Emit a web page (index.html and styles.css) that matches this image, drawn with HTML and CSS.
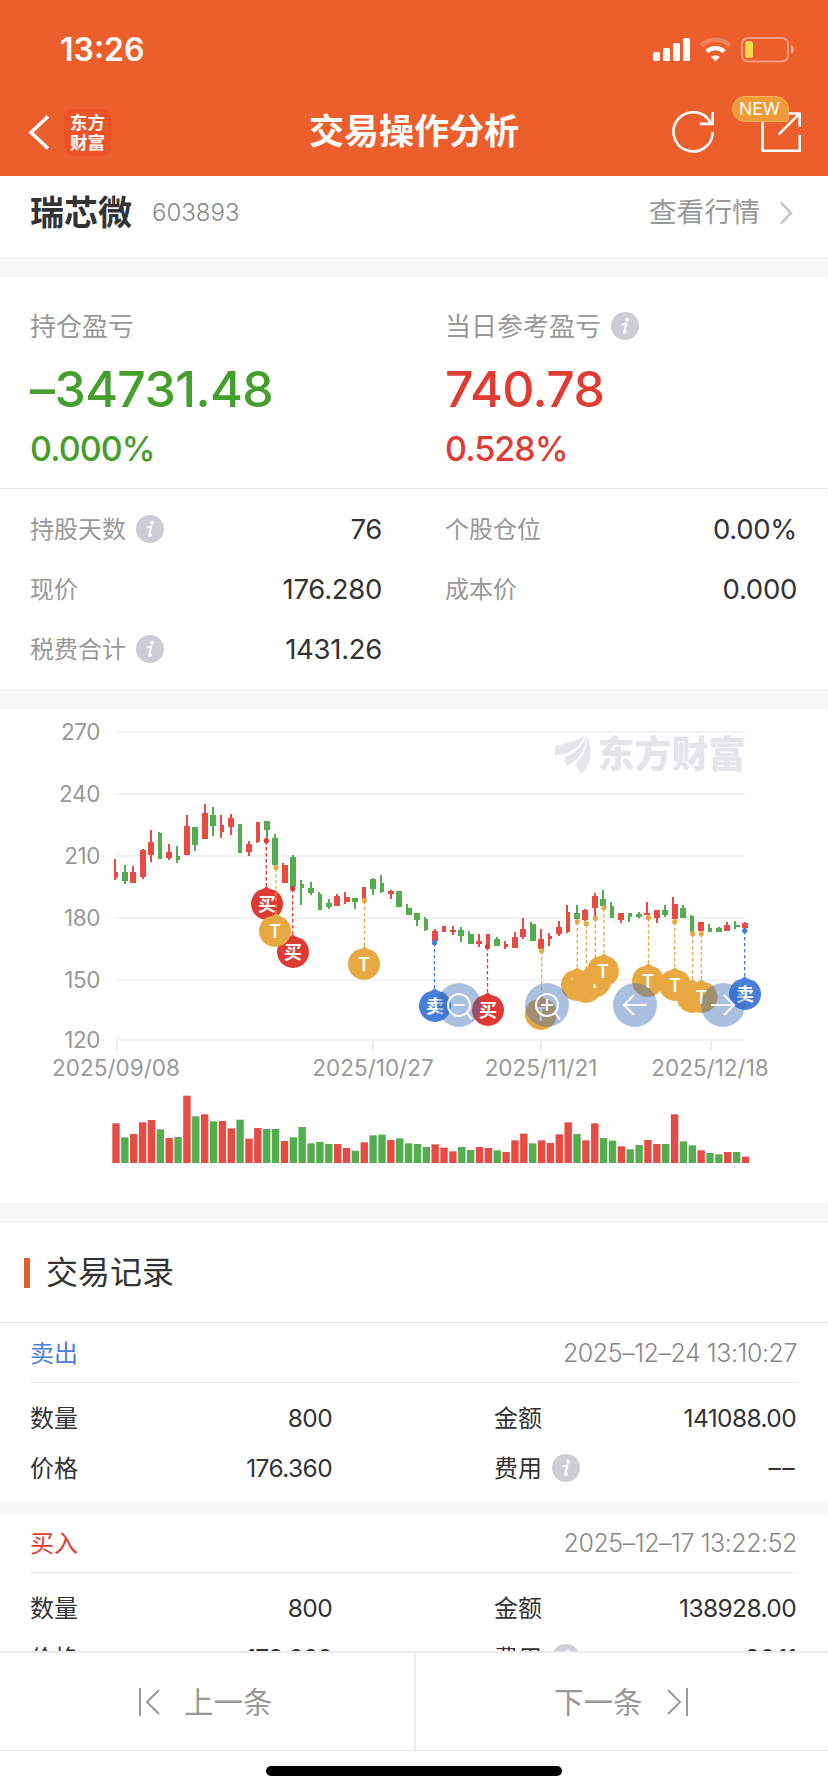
FILE: index.html
```html
<!DOCTYPE html>
<html lang="zh-CN">
<head>
<meta charset="utf-8">
<title>交易操作分析</title>
<link rel="stylesheet" href="styles.css">
</head>
<body>
<svg class="defs" width="0" height="0" aria-hidden="true">
  <symbol id="info" viewBox="0 0 28 28">
    <circle cx="14" cy="14" r="14" fill="#cdced3"/>
    <circle cx="16" cy="7.6" r="1.9" fill="#fff"/>
    <path d="M11.4 12.4c1.6-.2 2.8-.6 4-1.2l-2.3 9.3c-.2.9.8.5 2-.7" fill="none" stroke="#fff" stroke-width="2" stroke-linejoin="round" stroke-linecap="round"/>
  </symbol>
</svg>
<div class="screen">
  <header class="header">
    <div class="status">
      <span class="clock">13:26</span>
      <svg class="status-icons" width="144" height="28" viewBox="652 36 144 28">
        <g fill="#fff">
          <rect x="653" y="52" width="7" height="9" rx="1.5"/>
          <rect x="663" y="48" width="7" height="13" rx="1.5"/>
          <rect x="673" y="43" width="7" height="18" rx="1.5"/>
          <rect x="683" y="38" width="7" height="23" rx="1.5"/>
          <path d="M715.5 61.2l-4.3-4.3a6.2 6.2 0 0 1 8.6 0z"/>
        </g>
        <path d="M706.8 51.6a12.5 12.5 0 0 1 17.4 0" fill="none" stroke="#fff" stroke-width="4.4"/>
        <path d="M701.4 45.6a20 20 0 0 1 28.2 0" fill="none" stroke="#fff" stroke-opacity=".22" stroke-width="4.4"/>
        <rect x="742" y="38" width="46" height="23.5" rx="6" fill="none" stroke="#fff" stroke-opacity=".4" stroke-width="2"/>
        <path d="M791 45.2c4 1.6 4 6.800 0 8.400z" fill="#fff" fill-opacity=".45"/>
        <rect x="745" y="41" width="8" height="17" rx="3" fill="#f8d84a"/>
      </svg>
    </div>
    <div class="nav">
      <div class="nav-left">
        <svg width="22" height="36" viewBox="28 114 22 36"><path d="M48 116.500 31 132.500 48 148.500" fill="none" stroke="#fff" stroke-width="3.600"/></svg>
        <div class="logo"><span>东方</span><span>财富</span></div>
      </div>
      <h1 class="title">交易操作分析</h1>
      <div class="nav-right">
        <svg width="44" height="46" viewBox="672 109 44 46" fill="none" stroke="#fff" stroke-width="2.600">
          <path d="M712.700 132A19.600 19.600 0 1 1 710.600 123"/>
          <path d="M712.500 112v11.900h-12.700"/>
        </svg>
        <div class="share">
          <svg width="42" height="42" viewBox="760 111 42 42" fill="none" stroke="#fff" stroke-width="2.600">
            <path d="M762.500 113.500V150.700H799.700V135M788 113.500H799.700V127M799 114.200 778.500 134.700" stroke-linejoin="round"/>
          </svg>
          <span class="badge">NEW</span>
        </div>
      </div>
    </div>
  </header>

  <main class="content">
    <section class="stock">
      <b class="stock-name">瑞芯微</b>
      <span class="stock-code">603893</span>
      <span class="quote">查看行情</span>
      <svg width="14" height="24" viewBox="0 0 14 24"><path d="M2 1.500 12 12 2 22.500" fill="none" stroke="#c8c8cc" stroke-width="2.600"/></svg>
    </section>

    <section class="profit">
      <div class="profit-item green">
        <div class="label"><span>持仓盈亏</span></div>
        <div class="amount">–34731.48</div>
        <div class="percent">0.000%</div>
      </div>
      <div class="profit-item red">
        <div class="label"><span>当日参考盈亏</span><svg class="info"><use href="#info"/></svg></div>
        <div class="amount">740.78</div>
        <div class="percent">0.528%</div>
      </div>
    </section>

    <section class="metrics">
      <div class="metric"><span>持股天数</span><svg class="info"><use href="#info"/></svg><em>76</em></div>
      <div class="metric"><span>个股仓位</span><em>0.00%</em></div>
      <div class="metric"><span>现价</span><em>176.280</em></div>
      <div class="metric"><span>成本价</span><em>0.000</em></div>
      <div class="metric"><span>税费合计</span><svg class="info"><use href="#info"/></svg><em>1431.26</em></div>
    </section>

    <section class="chart">
      <svg id="chart" width="828" height="494" viewBox="0 709 828 494">
        <g id="grid"></g>
        <g class="watermark">
          <path d="M555 746C566 743 576 742 584 735.500C581 748 569 754 555 755.500Z"/>
          <path d="M567.500 766C564 762 564.500 758 565 757C576 753 583 746 585.500 736.500C587 750 579 758 567.500 766Z"/>
          <path d="M582 774C578 770 576 767 576 762.500C584 756 587.500 747 586.500 736C593 747 592 762 582 774Z"/>
          <text x="597.500" y="767.500">东方财富</text>
        </g>
        <g id="candles" shape-rendering="crispEdges"></g>
        <g id="markers"></g>
        <g id="volumes"></g>
        <g class="controls">
          <circle cx="459" cy="1005" r="22"/><circle cx="547" cy="1005" r="22"/>
          <circle cx="635" cy="1005" r="22"/><circle cx="723" cy="1005" r="22"/>
          <g class="control-icons">
            <circle cx="459" cy="1005" r="11"/><path d="M453.500 1005h11M467 1013l5 6.500"/>
            <circle cx="547" cy="1005" r="11"/><path d="M541 1005h12M547 999v12M555 1013l5 6.500"/>
            <path d="M647 1005H624M634 995l-10 10 10 10"/>
            <path d="M711 1005h23M724 995l10 10-10 10"/>
          </g>
        </g>
      </svg>
    </section>

    <section class="records">
      <h2 class="section-title"><span>交易记录</span></h2>
      <article class="record">
        <div class="record-head"><span class="sell">卖出</span><time>2025–12–24 13:10:27</time></div>
        <div class="record-grid">
          <div><span>数量</span><em>800</em></div>
          <div><span>金额</span><em>141088.00</em></div>
          <div><span>价格</span><em>176.360</em></div>
          <div><span>费用</span><svg class="info"><use href="#info"/></svg><em class="dashes">––</em></div>
        </div>
      </article>
      <article class="record">
        <div class="record-head"><span class="buy">买入</span><time>2025–12–17 13:22:52</time></div>
        <div class="record-grid">
          <div><span>数量</span><em>800</em></div>
          <div><span>金额</span><em>138928.00</em></div>
          <div><span>价格</span><em>173.660</em></div>
          <div><span>费用</span><svg class="info"><use href="#info"/></svg><em>36.11</em></div>
        </div>
      </article>
    </section>
  </main>

  <footer class="footer">
    <div class="pager">
      <div class="page-btn">
        <svg width="22" height="28" viewBox="0 0 22 28" fill="none" stroke="#999" stroke-width="2"><path d="M2 0v28M21 2 9 14l12 12"/></svg>
        <span>上一条</span>
      </div>
      <div class="page-btn next">
        <span>下一条</span>
        <svg width="22" height="28" viewBox="0 0 22 28" fill="none" stroke="#999" stroke-width="2"><path d="M20 0v28M1 2l12 12L1 26"/></svg>
      </div>
    </div>
    <div class="home"></div>
  </footer>
</div>
<script src="chart.js"></script>
</body>
</html>
```

FILE: styles.css
```css
* { box-sizing: border-box; margin: 0; padding: 0; }
body {
  width: 828px; height: 1792px; overflow: hidden; background: #fff; color: #333;
  font-family: Inter, "Noto Sans CJK SC", sans-serif;
}
em { font-style: normal; }
svg { display: block; flex: none; }
.defs { position: absolute; }
.screen { display: flex; flex-direction: column; height: 1792px; }

.header { flex: none; height: 176px; background: #ec5e2b; color: #fff; }
.status { display: flex; justify-content: space-between; align-items: center; height: 88px; padding: 12px 32px 0 60px; }
.clock { font-size: 32px; font-weight: 600; line-height: 40px; }
.nav { display: grid; grid-template-columns: 1fr auto 1fr; align-items: center; height: 88px; padding: 0 26px 0 28px; }
.nav-left { display: flex; align-items: center; gap: 14px; }
.logo {
  display: flex; flex-direction: column; justify-content: center; align-items: center;
  width: 47px; height: 47px; border-radius: 9px; background: #ec5428;
  font: 700 17.500px/20px "Noto Sans CJK SC", sans-serif;
}
.title { font-size: 35px; line-height: 44px; font-weight: 600; margin-left: -2px; padding-bottom: 2px; }
.nav-right { display: flex; justify-content: flex-end; align-items: center; gap: 44px; }
.share { position: relative; }
.badge {
  position: absolute; left: -28px; top: -15px; width: 57px; height: 26px;
  border: 1px solid #f6b45c; border-radius: 13px 13px 3px 13px; background: #f09a38;
  font-size: 17.500px; line-height: 24px; text-align: center; padding-right: 2px;
}

.content { flex: 1; min-height: 0; overflow: hidden; background: #f8f8f8; }
.content > section { background: #fff; }
.stock { display: flex; align-items: center; height: 81px; padding: 0 35px 8px 30px; }
.stock-name { font-size: 34px; line-height: 44px; font-weight: 600; margin-right: 20px; }
.stock-code { font-size: 24px; font-weight: 300; color: #888; }
.quote { margin: 0 19px 0 auto; font-size: 27.800px; line-height: 36px; color: #999; padding-bottom: 2px; }

.profit { display: grid; grid-template-columns: 415px 1fr; height: 212px; margin-top: 20px; padding: 31px 0 0 30px; border-bottom: 1px solid #e9e9e9; }
.label { display: flex; align-items: center; gap: 10px; height: 36px; font-size: 26px; color: #999; }
.label span, .metric span, .record-grid span, .record-head span { padding-bottom: 3px; }
.amount { margin-top: 19px; font-size: 50px; line-height: 52px; font-weight: 550; letter-spacing: -.6px; }
.percent { margin-top: 14px; font-size: 34px; line-height: 40px; font-weight: 500; letter-spacing: -.9px; }
.green { color: #459f2c; }
.red { color: #e13c33; }
.info { width: 28px; height: 28px; }

.metrics { display: grid; grid-template-columns: 352px 352px; column-gap: 63px; grid-auto-rows: 60px; height: 200px; padding: 10px 0 0 30px; }
.metric { display: flex; align-items: center; gap: 10px; font-size: 24px; color: #999; }
.metric em { margin-left: auto; font-size: 27.500px; letter-spacing: -.3px; color: #333; }

.chart { height: 494px; margin-top: 20px; }
.axis { font-size: 22.500px; fill: #999; }
.watermark { fill: #e5e5ea; }
.watermark text { font: 900 37px "Noto Sans CJK SC", sans-serif; }
.pin { font-size: 18px; font-weight: 600; fill: #fff; text-anchor: middle; }
.controls { fill: rgba(55, 105, 181, .42); }
.control-icons { fill: none; stroke: #fff; stroke-opacity: .9; stroke-width: 2.200; }

.records { margin-top: 20px; }
.section-title { display: flex; align-items: center; gap: 16px; height: 100px; padding-left: 24px; border-bottom: 1px solid #e9e9e9; font-size: 32px; font-weight: 400; }
.section-title span { padding-bottom: 5px; }
.section-title::before { content: ""; width: 6px; height: 30px; background: #d9602a; }
.record { height: 180px; padding: 0 30px; }
.record + .record { border-top: 10px solid #f7f7f7; height: 190px; }
.record-head { display: flex; align-items: center; justify-content: space-between; height: 60px; padding-right: 1px; border-bottom: 1px solid #e9e9e9; font-size: 24px; }
.record-head time { font-size: 25px; font-weight: 300; letter-spacing: -.45px; color: #888; }
.sell { color: #4a80dc; }
.buy { color: #e13c33; }
.record-grid { display: grid; grid-template-columns: 302px 302px; column-gap: 162px; grid-auto-rows: 50px; padding-top: 10px; }
.record-grid div { display: flex; align-items: center; gap: 10px; font-size: 24px; }
.record-grid em { margin-left: auto; font-size: 24.500px; letter-spacing: -.6px; }
.record-grid .dashes { letter-spacing: 1.500px; }

.footer { flex: none; height: 141px; background: #fff; border-top: 2px solid #ececec; }
.pager { display: grid; grid-template-columns: 1fr 1fr; height: 98px; border-bottom: 1px solid #e9e9e9; }
.page-btn { display: flex; align-items: center; gap: 24px; padding-left: 138px; font-size: 29.500px; color: #999; }
.page-btn span { padding-bottom: 4px; }
.next { border-left: 2px solid #ececec; }
.home { width: 296px; height: 10px; margin: 15px auto 0; border-radius: 5px; background: #000; }
```

FILE: chart.js
```js
const NS = 'http://www.w3.org/2000/svg';
const RED = '#e84a44', GREEN = '#54ae50';
const colors = { R: RED, G: GREEN };

function add(parent, tag, attrs, text) {
  const el = document.createElementNS(NS, tag);
  for (const k in attrs) el.setAttribute(k, attrs[k]);
  if (text) el.textContent = text;
  parent.appendChild(el);
}

const grid = document.getElementById('grid');
[[270, 732], [240, 794], [210, 856], [180, 918], [150, 980], [120, 1040]].forEach(([value, y]) => {
  add(grid, 'rect', { x: 116, y: y - 1, width: 629, height: 2, fill: '#f3f3f3' });
  add(grid, 'text', { x: 100, y: y + 8, class: 'axis', 'text-anchor': 'end', 'letter-spacing': -0.4 }, String(value));
});
[['2025/09/08', 117, 116], ['2025/10/27', 373, 373], ['2025/11/21', 541, 541], ['2025/12/18', 711, 710]].forEach(([date, x, cx]) => {
  add(grid, 'rect', { x: x - 1, y: 1041, width: 2, height: 9, fill: '#ececec' });
  add(grid, 'text', { x: cx, y: 1076, class: 'axis', 'text-anchor': 'middle' }, date);
});

// color, body left, body right, body top, body bottom, wick left, wick top, wick bottom (thirds of a pixel)
const candles = `
R 228 234 516 533 222 478 541|G 246 264 516 543 252 495 552|R 270 288 516 549 276 497 549
R 300 318 450 531 306 448 538|R 324 342 427 464 330 390 485|G 354 366 400 476 354 396 476
R 378 396 456 474 384 433 481|G 414 420 468 479 408 438 490|R 432 450 379 465 438 346 465
G 456 474 382 436 462 382 452|R 486 504 339 416 492 312 416|G 510 528 346 377 516 321 407
R 546 552 376 395 540 344 414|R 564 582 355 381 570 343 404|G 594 606 373 459 594 373 460
R 618 636 432 456 624 423 467|R 648 660 366 427 648 366 430|G 672 690 363 391 678 363 418
G 696 714 413 494 702 402 500|R 726 744 495 549 726 490 549|G 750 768 472 560 756 464 560
G 786 792 552 564 780 541 615|G 804 822 564 579 810 546 584|G 834 846 582 630 834 576 630
G 858 876 609 620 864 597 627|R 882 900 588 618 888 582 618|R 918 930 590 605 912 576 612
G 936 954 594 606 942 594 627|R 966 978 561 597 966 561 597|G 990 1008 536 567 996 533 586
G 1026 1032 549 576 1020 526 578|R 1044 1062 573 583 1050 570 597|G 1068 1086 573 622 1068 573 622
G 1098 1116 624 645 1098 612 645|G 1122 1140 639 660 1128 639 678|G 1152 1164 657 690 1152 651 692
R 1176 1194 693 722 1182 687 722|R 1206 1218 678 696 1206 678 696|R 1230 1248 689 696 1236 678 705
G 1254 1272 689 709 1260 682 725|G 1284 1302 702 731 1284 693 731|R 1308 1326 724 731 1314 703 740
R 1338 1350 702 738 1338 702 738|G 1362 1380 716 737 1368 711 737|R 1398 1404 733 741 1392 723 746
R 1416 1434 712 743 1422 696 743|R 1440 1458 687 711 1446 655 716|G 1470 1488 672 723 1470 667 723
R 1494 1512 716 747 1500 688 747|R 1530 1536 708 716 1524 699 738|R 1548 1566 681 702 1554 664 707
R 1584 1590 635 695 1578 615 698|G 1602 1620 638 657 1608 616 657|R 1626 1644 629 660 1632 626 664
R 1656 1674 588 624 1662 579 650|G 1680 1698 598 618 1686 570 618|G 1710 1722 617 654 1710 607 654
R 1734 1752 639 660 1740 639 670|G 1770 1776 639 651 1764 639 667|G 1788 1806 642 651 1794 636 655
R 1812 1830 639 646 1818 606 646|R 1842 1860 631 655 1848 631 669|G 1866 1884 630 645 1872 616 651
R 1896 1914 613 657 1896 590 657|G 1920 1938 624 653 1926 616 653|G 1950 1962 648 695 1950 646 695
R 1974 1992 666 693 1974 666 693|G 2010 2016 684 695 2004 672 695|G 2028 2046 684 696 2034 681 696
R 2052 2070 675 693 2058 667 693|G 2088 2100 675 682 2082 663 687|R 2106 2124 670 684 2112 667 690
`.trim().split(/[|\n]/);
const candleLayer = document.getElementById('candles');
candles.forEach(row => {
  const [c, ...n] = row.split(' ');
  const [l, r, t, b, w, wt, wb] = n.map(Number);
  add(candleLayer, 'rect', { x: 40 + l / 3, y: 700 + t / 3, width: (r - l) / 3, height: (b - t) / 3, fill: colors[c] });
  add(candleLayer, 'rect', { x: 40 + w / 3, y: 700 + wt / 3, width: 2, height: (wb - wt) / 3, fill: colors[c] });
});

const volumes = ('R119 G77 R87 R122 R129 G101 R75 G78 R202 G140 R146 G125 R126 R104 G130 R73 R105 G102 G102 R66 G77 G108 G59 G63 ' +
  'G57 R57 R45 G37 R62 G83 G85 R69 G74 G59 G57 G48 R56 R46 R35 G48 G39 R48 R45 G38 R33 R68 R88 G59 R68 R60 R86 R122 G87 R68 ' +
  'R119 G75 G67 R50 G41 G54 R69 R57 G57 R146 G65 G53 R38 G30 G26 R33 G33 R19').split(' ');
const volumeLayer = document.getElementById('volumes');
volumes.forEach((v, i) => {
  const h = Number(v.slice(1)) / 3;
  add(volumeLayer, 'rect', { x: 112.3 + i * 8.866, y: 1163 - h, width: 7.4, height: h, fill: colors[v[0]] });
});

const pinColors = { '买': '#de3a33', '卖': '#487fdb', T: '#e8a943' };
const pins = [
  ['买', 267, 904, 266.3], ['买', 293, 952, 292.7], ['T', 275, 931, 276], ['T', 364, 964, 364.5],
  ['卖', 435, 1006, 434.5], ['买', 488, 1010, 487.5], ['T', 541, 1014, 541.7],
  ['T', 577, 985, 577.3], ['T', 586, 987, 586.3], ['T', 595, 981.5, 595.3], ['T', 603, 971, 604],
  ['T', 648, 981, 648.5], ['T', 675, 985, 674.7], ['T', 692.5, 997, 692.7], ['T', 701.5, 997, 701.3],
  ['卖', 745, 994, 744.7]
];
const pinLayer = document.getElementById('markers');
pins.forEach(([label, x, y, dx]) => {
  const fill = pinColors[label];
  add(pinLayer, 'path', { d: `M${dx} ${y - 63}V${y - 16}`, stroke: fill, 'stroke-width': 1.3, 'stroke-dasharray': '3.500 2.500' });
  add(pinLayer, 'circle', { cx: dx, cy: y - 63.3, r: 2.6, fill });
  add(pinLayer, 'path', { d: `M${dx} ${y - 17.5}Q${dx + 4} ${y - 14} ${x + 9} ${y - 13.2}A16 16 0 1 1 ${x - 9} ${y - 13.2}Q${dx - 4} ${y - 14} ${dx} ${y - 17.5}Z`, fill });
  add(pinLayer, 'text', { x, y: y + 6.5, class: 'pin' }, label);
});
```
